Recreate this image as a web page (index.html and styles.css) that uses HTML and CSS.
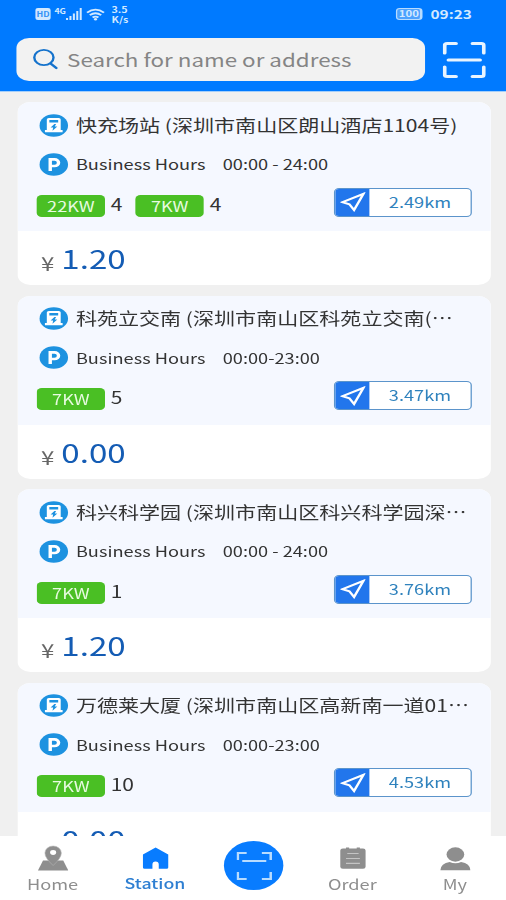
FILE: index.html
```html
<!DOCTYPE html>
<html lang="zh-CN">
<head>
    <meta charset="UTF-8">
    <meta name="viewport" content="width=device-width, initial-scale=1.0">
    <title>Station</title>
    <link rel="stylesheet" href="styles.css">
</head>
<body>
    <!-- shared icons -->
    <svg class="sprite" width="0" height="0">
        <symbol id="charger" viewBox="0 0 23 23">
            <circle cx="11.5" cy="11.5" r="11.3" fill="#1d92e0"/>
            <path d="M6 16V5.600Q6 4 7.600 4H15.400Q17 4 17 5.600V16H18.500V18.200H4.500V16Z" fill="#fff"/>
            <path d="M8 6h7v2.600H8zM12 10l-3 3.500h2l-.5 3.200 3.800-4.200h-2l1-2.500z" fill="#1d92e0"/>
        </symbol>
        <symbol id="parking" viewBox="0 0 23 23">
            <circle cx="11.5" cy="11.5" r="11.3" fill="#1d92e0"/>
            <path d="M8.700 18V6.400h3.400a3.200 3.300 0 0 1 0 6.600H8.700" fill="none" stroke="#fff" stroke-width="2.700"/>
        </symbol>
        <symbol id="navigate" viewBox="0 0 20 20">
            <path d="M1.800 10.200L18.300 1.800 10.900 18 7.200 12.200Z" fill="none" stroke="#fff" stroke-width="2" stroke-linejoin="miter"/>
        </symbol>
        <symbol id="scan" viewBox="0 0 34 36">
            <path d="M1.500 11V3.500Q1.500 1.500 3.500 1.500H10.500M23.500 1.500H30.500Q32.500 1.500 32.500 3.500V11M32.500 25V32.500Q32.500 34.500 30.500 34.500H23.500M10.500 34.500H3.500Q1.500 34.500 1.500 32.500V25M4.500 18H29.500" fill="none" stroke="currentColor" stroke-width="3" stroke-linecap="round"/>
        </symbol>
    </svg>

    <div class="screen">
        <header class="header">
            <div class="status-bar">
                <div class="status-left">
                    <span class="hd">HD</span>
                    <span class="network">4G</span>
                    <svg class="signal" width="13" height="12" viewBox="0 0 13 12"><path d="M1 12V10M3.700 12V8M6.400 12V5.500M9.100 12V3M11.800 12V0" stroke="#d3e9ff" stroke-width="1.600"/></svg>
                    <svg class="wifi" width="15" height="13" viewBox="0 0 15 12"><path d="M.8 4.200Q7.500-1.800 14.200 4.200M3 6.700Q7.500 2.800 12 6.700M5.200 9Q7.500 7.200 9.800 9" fill="none" stroke="#d3e9ff" stroke-width="1.700"/><circle cx="7.500" cy="10.800" r="1.200" fill="#d3e9ff"/></svg>
                    <div class="speed"><span>3.5</span><span>K/s</span></div>
                </div>
                <div class="status-right">
                    <span class="battery">100</span>
                    <span class="time">09:23</span>
                </div>
            </div>
            <div class="search-row">
                <div class="search">
                    <svg width="20" height="22" viewBox="0 0 20 22"><circle cx="8.700" cy="9.500" r="7.600" fill="none" stroke="#1673cc" stroke-width="1.900"/><path d="M14 15.500L18.500 20" stroke="#1673cc" stroke-width="2.200" stroke-linecap="round"/></svg>
                    <span>Search for name or address</span>
                </div>
                <svg class="scan" width="34" height="36"><use href="#scan"/></svg>
            </div>
        </header>

        <main class="list">
            <div class="card">
                <div class="info">
                    <div class="row title"><svg width="23" height="23"><use href="#charger"/></svg><span>快充场站 (深圳市南山区朗山酒店1104号)</span></div>
                    <div class="row hours"><svg width="23" height="23"><use href="#parking"/></svg><span>Business Hours</span><span>00:00 - 24:00</span></div>
                    <div class="power">
                        <span class="tag">22KW</span><span class="count">4</span>
                        <span class="tag">7KW</span><span class="count">4</span>
                        <div class="distance"><i><svg width="20" height="20"><use href="#navigate"/></svg></i><span>2.49km</span></div>
                    </div>
                </div>
                <div class="price"><span class="yen">¥</span><span>1.20</span></div>
            </div>

            <div class="card">
                <div class="info">
                    <div class="row title"><svg width="23" height="23"><use href="#charger"/></svg><span>科苑立交南 (深圳市南山区科苑立交南(…</span></div>
                    <div class="row hours"><svg width="23" height="23"><use href="#parking"/></svg><span>Business Hours</span><span>00:00-23:00</span></div>
                    <div class="power">
                        <span class="tag">7KW</span><span class="count">5</span>
                        <div class="distance"><i><svg width="20" height="20"><use href="#navigate"/></svg></i><span>3.47km</span></div>
                    </div>
                </div>
                <div class="price"><span class="yen">¥</span><span>0.00</span></div>
            </div>

            <div class="card">
                <div class="info">
                    <div class="row title"><svg width="23" height="23"><use href="#charger"/></svg><span>科兴科学园 (深圳市南山区科兴科学园深…</span></div>
                    <div class="row hours"><svg width="23" height="23"><use href="#parking"/></svg><span>Business Hours</span><span>00:00 - 24:00</span></div>
                    <div class="power">
                        <span class="tag">7KW</span><span class="count">1</span>
                        <div class="distance"><i><svg width="20" height="20"><use href="#navigate"/></svg></i><span>3.76km</span></div>
                    </div>
                </div>
                <div class="price"><span class="yen">¥</span><span>1.20</span></div>
            </div>

            <div class="card">
                <div class="info">
                    <div class="row title"><svg width="23" height="23"><use href="#charger"/></svg><span>万德莱大厦 (深圳市南山区高新南一道01…</span></div>
                    <div class="row hours"><svg width="23" height="23"><use href="#parking"/></svg><span>Business Hours</span><span>00:00-23:00</span></div>
                    <div class="power">
                        <span class="tag">7KW</span><span class="count">10</span>
                        <div class="distance"><i><svg width="20" height="20"><use href="#navigate"/></svg></i><span>4.53km</span></div>
                    </div>
                </div>
                <div class="price"><span class="yen"></span><span>0.00</span></div>
            </div>
        </main>

        <nav class="tabs">
            <div class="tab">
                <svg width="24" height="26" viewBox="0 0 24 26"><path d="M4 15.500H20L24 25.500H0Z" fill="#8e8e8e"/><path d="M12 20.500Q5.500 13 5.500 8A6.500 7 0 0 1 18.500 8Q18.500 13 12 20.500Z" fill="#8e8e8e" stroke="#b8b8b8" stroke-width=".5"/><circle cx="12" cy="7.500" r="2.400" fill="#fff"/></svg>
                <span>Home</span>
            </div>
            <div class="tab active">
                <svg width="24" height="26" viewBox="0 0 24 26"><path d="M12 2.500L22 9.500V22.500Q22 23.800 20.700 23.800H14.500V19.500A2.500 3 0 0 0 9.500 19.500V23.800H3.300Q2 23.800 2 22.500V9.500Z" fill="#087cff"/></svg>
                <span>Station</span>
            </div>
            <div class="scan-button"><svg width="28" height="28" viewBox="0 0 28 28"><path d="M1 8V1H8M20 1H27V8M27 20V27H20M8 27H1V20M4.500 9H23.500" fill="none" stroke="#b8dcff" stroke-width="2"/></svg></div>
            <div class="tab">
                <svg width="24" height="26" viewBox="0 0 24 26"><path d="M4 3.500H6.500V2.500H9V3.500H15V2.500H17.500V3.500H20Q22 3.500 22 5.500V21.800Q22 23.800 20 23.800H4Q2 23.800 2 21.800V5.500Q2 3.500 4 3.500Z" fill="#8e8e8e"/><path d="M7.500 8.500H16.500M6.500 13.500H17.500M6.500 18.300H17.500" stroke="#c4c4c4" stroke-width="1.200"/></svg>
                <span>Order</span>
            </div>
            <div class="tab">
                <svg width="24" height="26" viewBox="0 0 24 26"><ellipse cx="12" cy="9.500" rx="7" ry="7.200" fill="#8e8e8e"/><path d="M0 25.300Q.5 18.500 7.500 17Q12 19.500 16.500 17Q23.500 18.500 24 25.300Z" fill="#8e8e8e"/></svg>
                <span>My</span>
            </div>
        </nav>
    </div>
</body>
</html>
```
FILE: styles.css
```css
* {
    box-sizing: border-box;
}

body {
    margin: 0;
    overflow: hidden;
    background: #f0f0f0;
    font-family: "Noto Sans CJK SC", sans-serif;
    color: #333;
}

.sprite {
    position: absolute;
}

.screen {
    width: 400px;
    height: 900px;
    display: flex;
    flex-direction: column;
    overflow: hidden;
    transform: scaleX(1.265);
    transform-origin: 0 0;
}

svg {
    display: block;
    flex: none;
}

.header {
    flex: none;
    height: 92px;
    background: #007aff;
    border-bottom: 1px solid #a5cffa;
}

.status-bar {
    display: flex;
    justify-content: space-between;
    height: 38px;
    padding: 0 27px 10px 28px;
    color: #d3e9ff;
}

.status-left,
.status-right {
    display: flex;
    align-items: center;
}

.hd {
    width: 12px;
    height: 12px;
    border-radius: 2px;
    background: #d3e9ff;
    color: #3592f5;
    font: bold 7px/12px "Noto Sans CJK SC", sans-serif;
    text-align: center;
}

.network {
    align-self: flex-start;
    margin: 6px 0 0 3px;
    font-size: 7px;
    font-weight: bold;
    line-height: 10px;
}

.wifi {
    margin-left: 3px;
}

.speed {
    display: flex;
    flex-direction: column;
    margin-left: 5px;
    font-size: 8.500px;
    font-weight: bold;
    line-height: 10px;
}

.battery {
    width: 21px;
    height: 12px;
    margin-right: 6px;
    border: 1px solid #b8dcff;
    border-right-width: 2px;
    border-radius: 3px;
    background: #4da2ff;
    font: bold 9px/10px "Noto Sans CJK SC", sans-serif;
    text-align: center;
}

.time {
    font-size: 12.200px;
    font-weight: bold;
}

.search-row {
    display: flex;
    align-items: center;
    padding-left: 13px;
}

.search {
    display: flex;
    align-items: center;
    gap: 7px;
    width: 323px;
    height: 43px;
    padding: 0 0 1px 13px;
    border-radius: 10px;
    background: #f2f2f2;
    color: #858585;
    font-size: 17.700px;
}

.scan {
    margin-left: 14px;
    color: #e8f4ff;
}

.list {
    flex: 1;
    min-height: 0;
    display: flex;
    flex-direction: column;
    gap: 10.500px;
    padding: 10px 12px 0 14px;
    overflow: hidden;
}

.card {
    flex: none;
    height: 183px;
    border-radius: 10px;
    background: #fff;
    overflow: hidden;
}

.info {
    height: 129px;
    padding: 11.500px 15px 0;
    background: #f5f8ff;
}

.row {
    display: flex;
    align-items: center;
    gap: 6px;
    height: 23px;
    padding-left: 2px;
    white-space: nowrap;
}

.row span {
    margin-top: -1px;
}

.title {
    font-size: 16.650px;
}

.hours {
    margin-top: 16px;
    font-size: 14.400px;
}

.hours span + span {
    margin-left: 7.500px;
}

.power {
    display: flex;
    align-items: flex-end;
    height: 41px;
}

.tag {
    width: 54px;
    height: 22px;
    border-radius: 4px;
    background: #4abf24;
    color: #e8fbe1;
    font-size: 14.300px;
    line-height: 21px;
    text-align: center;
}

.count {
    margin: 0 10.500px 1px 4.500px;
    font-size: 16.600px;
    line-height: 24px;
}

.distance {
    display: flex;
    width: 109px;
    height: 29px;
    margin-left: auto;
    border: 1px solid #5b94cb;
    border-radius: 4px;
    background: #fff;
    overflow: hidden;
}

.distance i {
    display: flex;
    align-items: center;
    justify-content: center;
    width: 27px;
    background: #2276ec;
}

.distance span {
    flex: 1;
    color: #2f82bd;
    font-size: 14.400px;
    line-height: 26px;
    text-align: center;
}

.price {
    display: flex;
    align-items: baseline;
    padding-left: 18.500px;
    color: #145cb4;
    font-size: 26.200px;
    line-height: 55px;
}

.yen {
    width: 16px;
    transform: translateY(1.500px);
    color: #666;
    font-size: 19px;
}

.tabs {
    flex: none;
    display: flex;
    height: 64px;
    padding-left: 1px;
    background: #fff;
    color: #8e8e8e;
}

.tab {
    flex: none;
    width: 81px;
    display: flex;
    flex-direction: column;
    align-items: center;
    padding-top: 9px;
    font-size: 14.400px;
    line-height: 25px;
}

.active {
    color: #2e7fd2;
    font-size: 14px;
    font-weight: 500;
}

.scan-button {
    display: flex;
    align-items: center;
    justify-content: center;
    width: 48px;
    height: 49px;
    margin: 5px 14px 0;
    border-radius: 50%;
    background: #087cff;
}
```
